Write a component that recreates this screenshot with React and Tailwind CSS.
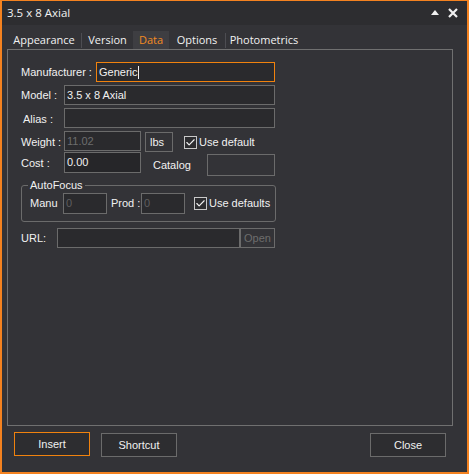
import { Check } from 'lucide-react'

const LABEL = 'text-[11px] text-[#f1f1f1] leading-none'
const FIELD = 'h-[20px] bg-[#2a2a2d] border border-[#6b6b6b] flex items-center pl-[2px] text-[11px] leading-none'

function Checkbox({ label, ml }) {
  return (
    <div className={`flex items-center ${ml}`}>
      <span className="w-[13px] h-[13px] border border-[#c9c9c9] bg-[#2d2d30] flex items-center justify-center">
        <Check size={11} strokeWidth={2.5} className="text-[#f1f1f1]" />
      </span>
      <span className={`${LABEL} ml-[2px]`}>{label}</span>
    </div>
  )
}

function Tab({ label, w, active }) {
  return (
    <div className={`${w} h-[18px] flex items-center justify-center text-[11px] ${active ? 'bg-[#3e3e42] text-[#f38b22]' : 'text-[#f1f1f1]'}`}>
      {label}
    </div>
  )
}

function Sep() {
  return <div className="w-px h-[15px] bg-[#4d4d52]" />
}

function Btn({ label, w = 'w-[76px]', orange }) {
  return (
    <button type="button"
      className={`${w} h-[24px] bg-[#2d2d30] border ${orange ? 'border-[#f0820e]' : 'border-[#6b6b6b]'} text-[11px] text-[#f1f1f1]`}
      style={{ fontFamily: '"Liberation Sans", Arial, sans-serif' }}>
      {label}
    </button>
  )
}

export default function App() {
  return (
    <div className="w-[469px] h-[474px] bg-[#333337] border-[#f48220] border-t border-x-2 border-b-2 flex flex-col overflow-hidden"
      style={{ fontFamily: '"Open Sans", "Noto Sans", sans-serif' }}>
      {/* title bar */}
      <div className="h-[24px] bg-[#2d2d30] flex items-center pl-[5px] pr-[5px] text-[11.5px] text-[#f1f1f1]">
        <span>3.5 x 8 Axial</span>
        <div className="ml-auto flex items-center">
          <svg width="8" height="5" viewBox="0 0 8 5" className="mt-[-2px]">
            <polygon points="0,5 4,0 8,5" fill="#f1f1f1" />
          </svg>
          <svg width="10" height="10" viewBox="0 0 10 10" className="ml-[9px] mr-[4px]">
            <path d="M1 1 L9 9 M9 1 L1 9" stroke="#f1f1f1" strokeWidth="2.2" />
          </svg>
        </div>
      </div>

      {/* tabs */}
      <div className="mt-[6px] ml-[5px] flex items-center">
        <Tab label="Appearance" w="w-[74px]" />
        <Sep />
        <Tab label="Version" w="w-[51px]" />
        <Tab label="Data" w="w-[36px]" active />
        <Tab label="Options" w="w-[56px]" />
        <Sep />
        <Tab label="Photometrics" w="w-[76px]" />
      </div>

      {/* data panel */}
      <div className="ml-[5px] w-[446px] h-[377px] border border-[#707070] flex flex-col pl-[13px]"
        style={{ fontFamily: '"Liberation Sans", Arial, sans-serif' }}>
        <div className="mt-[12px] h-[20px] flex items-center">
          <span className={`${LABEL} w-[75px]`}>Manufacturer :</span>
          <div className={`${FIELD} w-[179px] border-[#f0820e] text-[#f1f1f1]`}>
            Generic<span className="w-px h-[13px] bg-[#f1f1f1]" />
          </div>
        </div>

        <div className="mt-[3px] h-[20px] flex items-center">
          <span className={`${LABEL} w-[43px]`}>Model :</span>
          <div className={`${FIELD} w-[211px] text-[#f1f1f1]`}>3.5 x 8 Axial</div>
        </div>

        <div className="mt-[3px] h-[20px] flex items-center">
          <span className={`${LABEL} w-[43px] pl-[2px] pt-[2px]`}>Alias :</span>
          <div className={`${FIELD} w-[211px]`} />
        </div>

        <div className="mt-[3px] h-[21px] flex items-start">
          <span className={`${LABEL} w-[43px] mt-[6px]`}>Weight :</span>
          <div className={`${FIELD} w-[77px] text-[#6d6d6d]`}>11.02</div>
          <div className="ml-[4px] mt-[1px] w-[28px] h-[20px] border border-[#6b6b6b] flex items-center pl-[4px] text-[11px] text-[#f1f1f1]">lbs</div>
          <div className="mt-[5px]"><Checkbox label="Use default" ml="ml-[11px]" /></div>
        </div>

        <div className="h-[24px] flex items-start">
          <span className={`${LABEL} w-[43px] mt-[6px]`}>Cost :</span>
          <div className={`${FIELD} w-[77px] h-[21px] bg-[#262629] text-[#f1f1f1]`}>0.00</div>
          <span className={`${LABEL} w-[54px] ml-[12px] mt-[8px]`}>Catalog</span>
          <div className={`${FIELD} w-[68px] h-[22px] mt-[2px] bg-[#333337]`} />
        </div>

        {/* autofocus group */}
        <div className="relative mt-[9px] w-[255px] h-[37px] border border-[#6b6b6b] rounded-[3px] flex items-start pl-[8px]">
          <span className={`${LABEL} absolute left-[6px] top-[-6px] px-[2px] bg-[#333337]`}>AutoFocus</span>
          <span className={`${LABEL} w-[33px] mt-[12px]`}>Manu</span>
          <div className={`${FIELD} w-[44px] h-[21px] mt-[7px] text-[#5f5f5f]`}>0</div>
          <span className={`${LABEL} w-[30px] ml-[4px] mt-[12px]`}>Prod :</span>
          <div className={`${FIELD} w-[44px] h-[21px] mt-[7px] text-[#5f5f5f]`}>0</div>
          <div className="mt-[11px]"><Checkbox label="Use defaults" ml="ml-[9px]" /></div>
        </div>

        <div className="mt-[6px] h-[20px] flex items-center">
          <span className={`${LABEL} w-[36px]`}>URL:</span>
          <div className={`${FIELD} w-[183px]`} />
          <div className="w-[35px] h-[20px] border border-[#6b6b6b] flex items-center justify-center text-[11px] text-[#6d6d6d]">Open</div>
        </div>
      </div>

      {/* footer buttons */}
      <div className="mt-[5px] ml-[12px] flex items-center">
        <Btn label="Insert" orange />
        <div className="ml-[11px]"><Btn label="Shortcut" /></div>
        <div className="ml-auto mr-[21px]"><Btn label="Close" /></div>
      </div>
    </div>
  )
}
